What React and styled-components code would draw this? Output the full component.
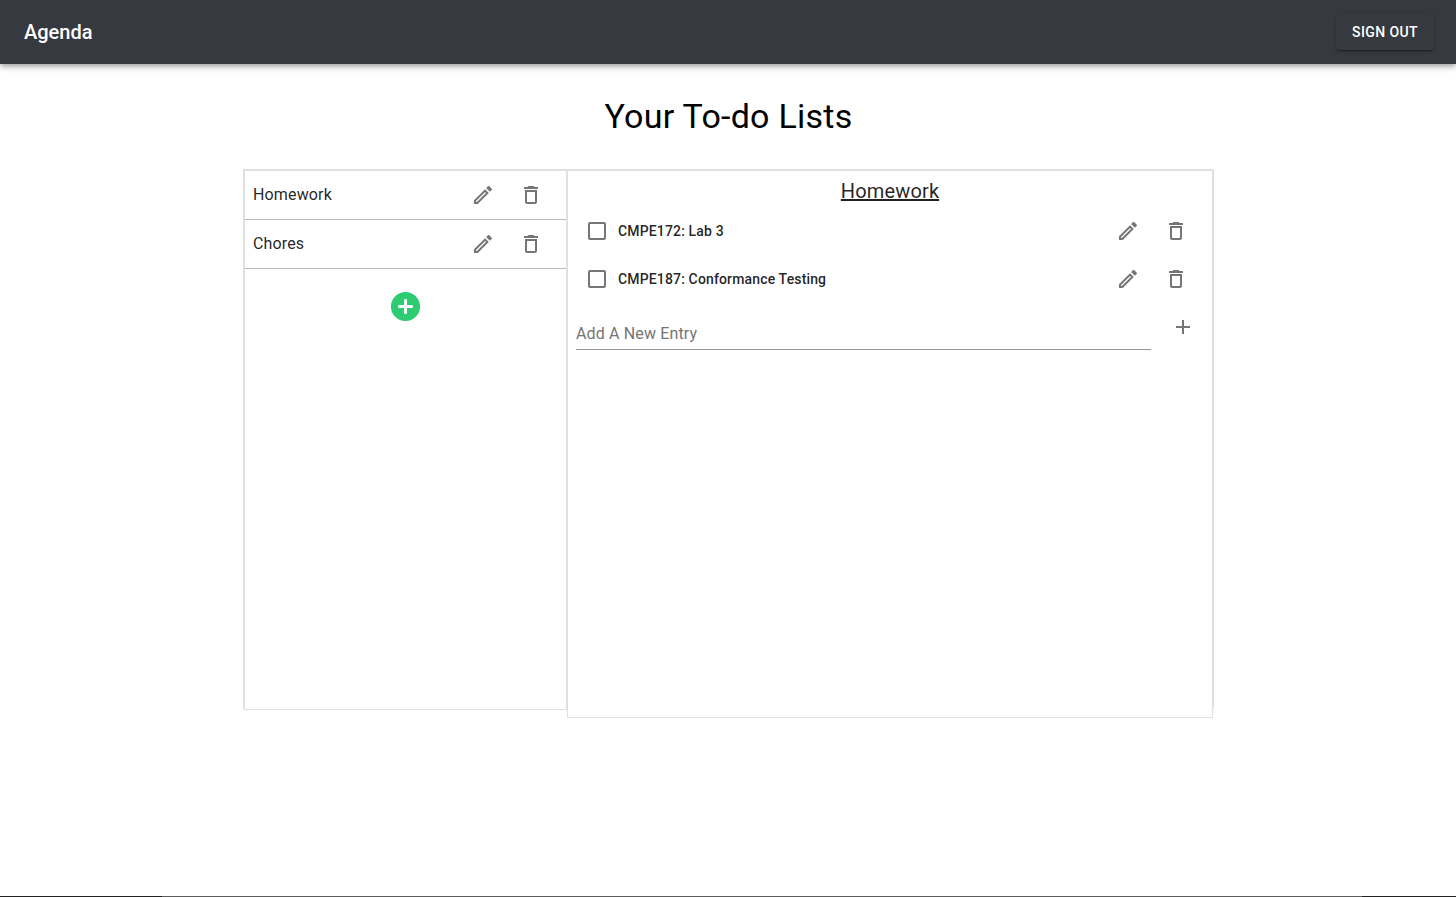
import React from "react";
import styled, { createGlobalStyle } from "styled-components";

const GlobalStyle = createGlobalStyle`
  *, *::before, *::after { box-sizing: border-box; }
  body {
    margin: 0;
    background: #fff;
    color: rgba(0, 0, 0, 0.87);
    font-family: Roboto, "Liberation Sans", sans-serif;
  }
`;

const Page = styled.div`
  display: flex;
  flex-direction: column;
  min-height: 100vh;
`;

const AppBar = styled.header`
  display: flex;
  align-items: center;
  justify-content: space-between;
  min-height: 64px;
  padding: 0 22px 0 24px;
  background: #363940;
  color: #fff;
  box-shadow:
    0 2px 4px -1px rgba(0, 0, 0, 0.2),
    0 4px 5px 0 rgba(0, 0, 0, 0.14),
    0 1px 10px 0 rgba(0, 0, 0, 0.12);
`;

const Brand = styled.div`
  font-size: 20px;
  font-weight: 500;
  line-height: 32px;
`;

const SignOutButton = styled.button`
  padding: 6px 16px;
  border: 0;
  border-radius: 4px;
  background: #363940;
  color: #fff;
  font: 500 14px/24px Roboto, "Liberation Sans", sans-serif;
  letter-spacing: 0.02857em;
  text-transform: uppercase;
  cursor: pointer;
  box-shadow:
    0 3px 1px -2px rgba(0, 0, 0, 0.2),
    0 2px 2px 0 rgba(0, 0, 0, 0.14),
    0 1px 5px 0 rgba(0, 0, 0, 0.12);
`;

const Main = styled.main`
  display: flex;
  flex: 1;
  flex-direction: column;
  align-items: center;
  padding-left: 1px;
`;

const PageTitle = styled.h1`
  margin: 32px 0;
  color: #000;
  font-size: 34px;
  font-weight: 400;
  line-height: 41px;
  letter-spacing: 0.00735em;
`;

const Board = styled.div`
  display: flex;
  align-items: flex-start;
  width: calc(66.6667% + 1px);
  height: calc(60vh + 2px);
  border: 1px solid #e0e0e0;
  border-bottom: 0;
`;

const Panel = styled.section`
  display: flex;
  flex-direction: column;
  min-width: 0;
  border: 1px solid #e0e0e0;
  background: #fff;
`;

const ListsPanel = styled(Panel)`
  flex: none;
  width: 33.3333%;
  min-height: calc(60vh + 2px);
`;

const EntriesPanel = styled(Panel)`
  flex: 1;
  min-height: calc(60vh + 10px);
`;

const Rows = styled.ul`
  margin: 0;
  padding: 0;
  list-style: none;
`;

const ListRow = styled.li`
  display: flex;
  align-items: center;
  padding: 0 11px 0 8px;
  border-bottom: 1px solid #bdbdbd;
`;

const ListName = styled.a`
  flex: 1;
  color: inherit;
  font-size: 16px;
  line-height: 24px;
  letter-spacing: 0.00938em;
  text-decoration: none;
`;

const IconButton = styled.button`
  display: flex;
  flex: none;
  padding: 12px;
  border: 0;
  background: none;
  color: #757575;
  cursor: pointer;
`;

const AddListButton = styled(IconButton)`
  align-self: center;
  margin-top: 20px;
  padding: 0;
  color: #2ecc71;
`;

const EntriesTitle = styled.h2`
  margin: 4px 0 0;
  font-size: 20px;
  font-weight: 400;
  line-height: 32px;
  letter-spacing: 0.0075em;
  text-align: center;
  text-decoration: underline;
`;

const EntryRow = styled.li`
  display: flex;
  align-items: center;
  padding: 0 12px 0 20px;
`;

const Checkbox = styled.input`
  flex: none;
  width: 18px;
  height: 18px;
  margin: 0 12px 0 0;
  border: 2px solid #757575;
  border-radius: 2px;
  appearance: none;
  cursor: pointer;

  &:checked { background: #757575; }
`;

const EntryLabel = styled.label`
  flex: 1;
  font-size: 14px;
  font-weight: 500;
  line-height: 24px;
  letter-spacing: 0.01071em;
`;

const AddForm = styled.form`
  display: flex;
  gap: 8px;
  padding: 0 5px 0 8px;
`;

const AddInput = styled.input`
  flex: 1;
  min-width: 0;
  height: 31px;
  margin-top: 16px;
  padding: 0 0 2px;
  border: 0;
  border-bottom: 1px solid #949494;
  outline: 0;
  background: none;
  color: inherit;
  font: 400 16px/24px Roboto, "Liberation Sans", sans-serif;
  letter-spacing: 0.00938em;

  &::placeholder {
    color: #757575;
    opacity: 1;
  }
`;

const BottomEdge = styled.footer`
  display: flex;
  height: 1px;
  padding: 0 94px 0 162px;
  background: #222;
`;

const EdgeCenter = styled.div`
  flex: 1;
  background: #5c5c5c;
`;

const icons = {
  edit: "M3 17.25V21h3.75L17.81 9.94l-3.75-3.75L3 17.25zM5.92 19H5v-.92l9.06-9.06.92.92L5.92 19zM20.71 5.63l-2.34-2.34c-.2-.2-.45-.29-.71-.29s-.51.1-.7.29l-1.83 1.83 3.75 3.75 1.83-1.83c.39-.39.39-1.02 0-1.41z",
  trash: "M6 19c0 1.1.9 2 2 2h8c1.1 0 2-.9 2-2V7H6v12zM8 9h8v10H8V9zm7.5-5l-1-1h-5l-1 1H5v2h14V4z",
  plus: "M19 13h-6v6h-2v-6H5v-2h6V5h2v6h6v2z",
  addCircle: "M12 2C6.48 2 2 6.48 2 12s4.48 10 10 10 10-4.48 10-10S17.52 2 12 2zm5 11h-4v4h-2v-4H7v-2h4V7h2v4h4v2z",
};

function Icon({ name, size = 24 }) {
  return (
    <svg width={size} height={size} viewBox="0 0 24 24" fill="currentColor" aria-hidden="true">
      <path d={icons[name]} />
    </svg>
  );
}

function RowActions({ label }) {
  return (
    <>
      <IconButton type="button" aria-label={`Edit ${label}`}><Icon name="edit" /></IconButton>
      <IconButton type="button" aria-label={`Delete ${label}`}><Icon name="trash" /></IconButton>
    </>
  );
}

const lists = ["Homework", "Chores"];
const entries = ["CMPE172: Lab 3", "CMPE187: Conformance Testing"];

export default function App() {
  return (
    <>
      <GlobalStyle />
      <Page>
        <AppBar>
          <Brand>Agenda</Brand>
          <SignOutButton type="button">Sign out</SignOutButton>
        </AppBar>
        <Main>
          <PageTitle>Your To-do Lists</PageTitle>
          <Board>
            <ListsPanel>
              <Rows>
                {lists.map((name) => (
                  <ListRow key={name}>
                    <ListName href="#">{name}</ListName>
                    <RowActions label={name} />
                  </ListRow>
                ))}
              </Rows>
              <AddListButton type="button" aria-label="Add a list">
                <Icon name="addCircle" size={35} />
              </AddListButton>
            </ListsPanel>
            <EntriesPanel>
              <EntriesTitle>Homework</EntriesTitle>
              <Rows>
                {entries.map((text, i) => (
                  <EntryRow key={text}>
                    <Checkbox type="checkbox" id={`entry-${i}`} />
                    <EntryLabel htmlFor={`entry-${i}`}>{text}</EntryLabel>
                    <RowActions label={text} />
                  </EntryRow>
                ))}
              </Rows>
              <AddForm onSubmit={(event) => event.preventDefault()}>
                <AddInput type="text" aria-label="Add A New Entry" placeholder="Add A New Entry" />
                <IconButton type="submit" aria-label="Add entry"><Icon name="plus" /></IconButton>
              </AddForm>
            </EntriesPanel>
          </Board>
        </Main>
        <BottomEdge>
          <EdgeCenter />
        </BottomEdge>
      </Page>
    </>
  );
}
